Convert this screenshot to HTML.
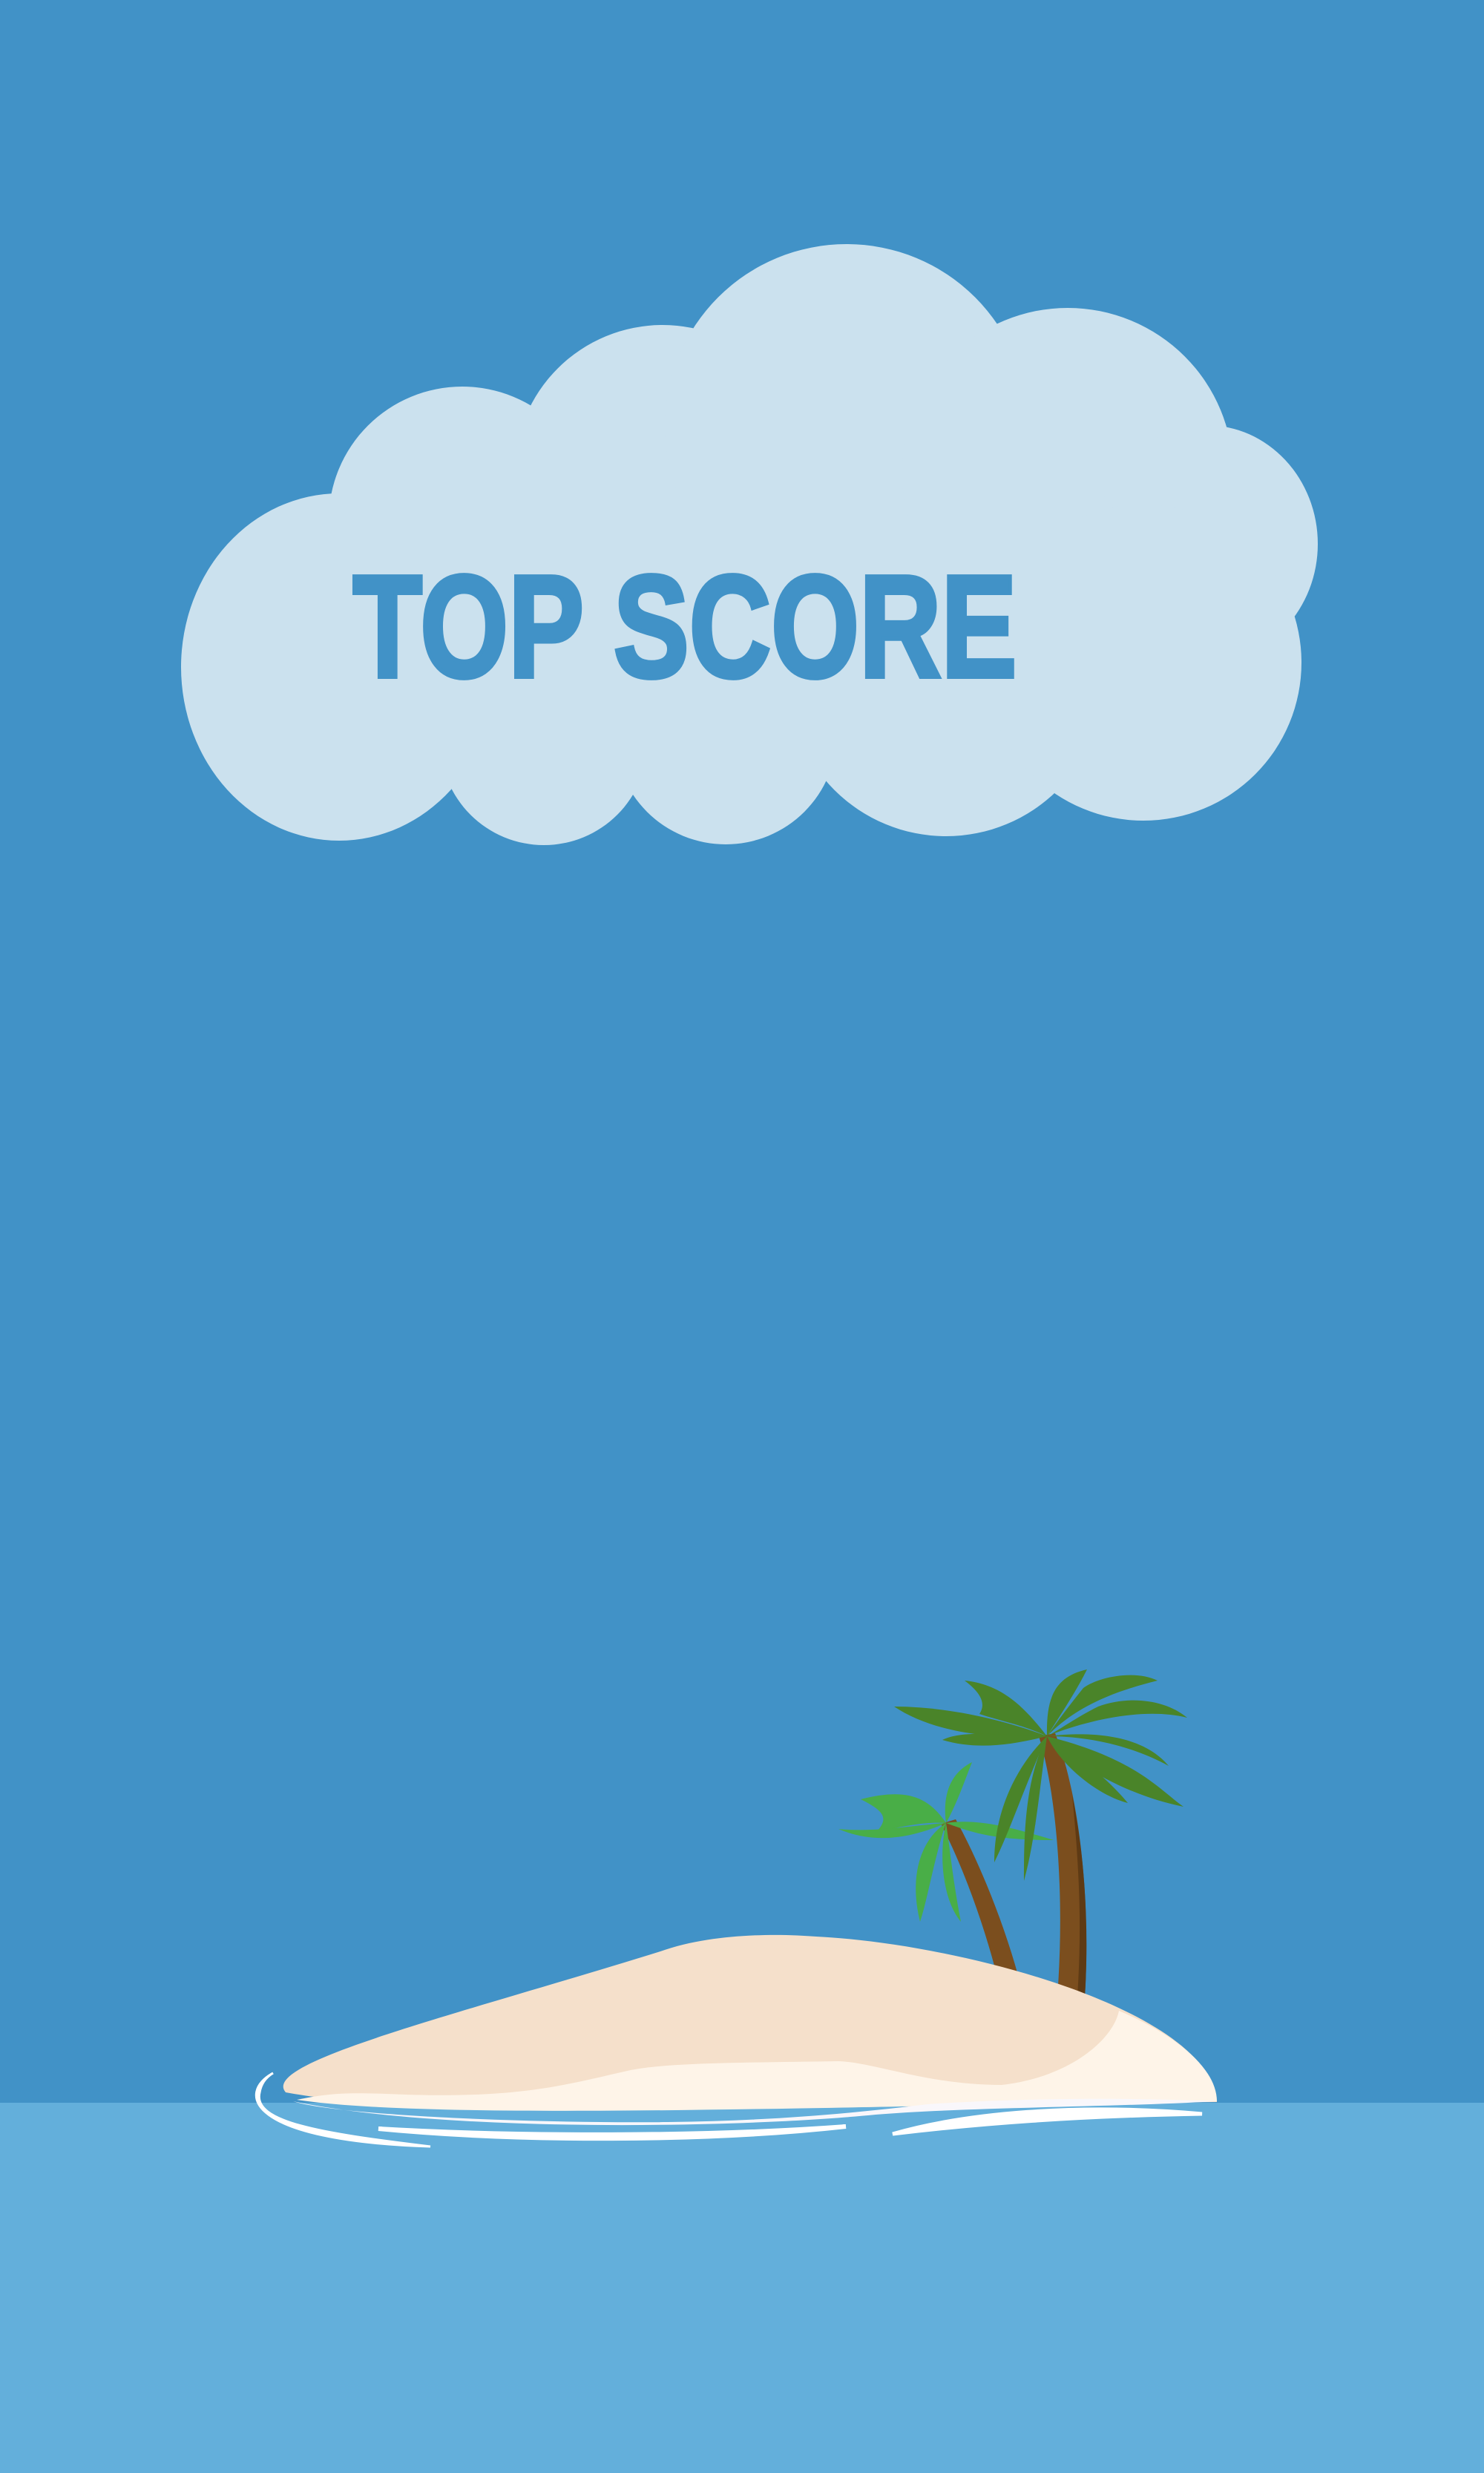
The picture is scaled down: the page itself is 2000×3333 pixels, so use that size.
<!DOCTYPE html>
<html><head><meta charset="utf-8"><style>
html,body{margin:0;padding:0;width:2000px;height:3333px;overflow:hidden;background:#4192c7}
svg{display:block}
</style></head><body>
<svg width="2000" height="3333" viewBox="0 0 2000 3333" xmlns="http://www.w3.org/2000/svg">
<rect width="2000" height="3333" fill="#4192c7"/>
<rect y="2834" width="2000" height="499" fill="#63afdb"/>
<g fill="#cbe1ee">
<ellipse cx="457" cy="899" rx="213" ry="234"/>
<circle cx="623" cy="701" r="180"/>
<circle cx="893" cy="638" r="200"/>
<circle cx="1141" cy="574" r="245"/>
<circle cx="1439" cy="638" r="223"/>
<ellipse cx="1626" cy="733" rx="150" ry="160"/>
<circle cx="733" cy="999" r="140"/>
<circle cx="978" cy="988" r="150"/>
<circle cx="1275" cy="914" r="213"/>
<circle cx="1541" cy="893" r="213"/>
<rect x="500" y="700" width="1200" height="280"/>
</g>
<text x="923" y="912" text-anchor="middle" font-family="Liberation Sans, sans-serif" font-weight="bold" font-size="196" fill="#4192c7" stroke="#4192c7" stroke-width="6" transform="translate(923 0) scale(0.78 1) translate(-923 0)">TOP SCORE</text>
<!-- palms -->
<g>
<path d="M1268,2458 C1300,2520 1328,2600 1345,2668 L1372,2662 C1352,2590 1320,2510 1288,2452 Z" fill="#7b4e1e"/>
<path d="M1400,2340 C1425,2420 1435,2560 1425,2690 L1462,2692 C1470,2560 1455,2420 1422,2336 Z" fill="#7b4e1e"/>
<path d="M1445,2420 C1455,2520 1458,2600 1452,2690 L1462,2692 C1468,2600 1462,2500 1445,2420Z" fill="#5e3a14"/>
<g fill="#49ae47">
<path d="M1275,2457 C1250,2420 1220,2410 1160,2425 C1190,2440 1200,2450 1180,2470 C1220,2460 1250,2455 1275,2457Z"/>
<path d="M1275,2457 C1230,2460 1180,2470 1130,2465 C1165,2480 1210,2485 1275,2457Z"/>
<path d="M1275,2457 C1270,2420 1280,2390 1310,2375 C1300,2400 1290,2430 1275,2457Z"/>
<path d="M1275,2457 C1240,2480 1225,2530 1240,2590 C1250,2560 1260,2500 1275,2457Z"/>
<path d="M1275,2457 C1265,2500 1270,2560 1295,2590 C1285,2540 1280,2490 1275,2457Z"/>
<path d="M1275,2457 C1310,2470 1340,2480 1420,2480 C1370,2465 1320,2450 1275,2457Z"/>
</g>
<g fill="#4a8429">
<path d="M1411,2340 C1380,2300 1350,2270 1300,2265 C1320,2280 1330,2295 1320,2310 C1350,2320 1380,2325 1411,2340Z"/>
<path d="M1411,2340 C1360,2320 1280,2300 1205,2300 C1250,2330 1320,2345 1411,2340Z"/>
<path d="M1411,2340 C1360,2340 1300,2330 1270,2345 C1320,2360 1370,2350 1411,2340Z"/>
<path d="M1411,2340 C1410,2290 1420,2260 1465,2250 C1450,2280 1430,2310 1411,2340Z"/>
<path d="M1411,2340 C1450,2300 1500,2280 1560,2265 C1530,2250 1480,2260 1460,2275 C1440,2300 1425,2320 1411,2340Z"/>
<path d="M1411,2340 C1460,2320 1540,2300 1600,2315 C1570,2290 1520,2285 1480,2300 C1450,2315 1430,2330 1411,2340Z"/>
<path d="M1411,2340 C1460,2340 1520,2350 1575,2380 C1550,2350 1500,2330 1411,2340Z"/>
<path d="M1411,2340 C1450,2380 1520,2420 1595,2435 C1560,2410 1530,2370 1411,2340Z"/>
<path d="M1411,2340 C1430,2380 1480,2420 1520,2430 C1495,2400 1460,2370 1411,2340Z"/>
<path d="M1411,2340 C1370,2380 1340,2440 1340,2510 C1360,2470 1380,2410 1411,2340Z"/>
<path d="M1411,2340 C1380,2400 1380,2480 1380,2535 C1395,2480 1400,2420 1411,2340Z"/>
<path d="M1411,2340 C1390,2380 1390,2420 1395,2460 C1400,2420 1405,2380 1411,2340Z"/>
</g>
</g>
<!-- island -->
<path d="M385,2820 C350,2780 600,2720 890,2630 C960,2605 1050,2606 1100,2610 C1300,2620 1630,2710 1640,2832 L1640,2833 C1200,2836 600,2860 385,2820Z" fill="#f5e0cb"/>
<path d="M400,2830 C440,2822 460,2820 520,2822 C700,2830 760,2810 850,2790 C900,2780 1000,2780 1130,2778 C1180,2780 1250,2810 1350,2810 C1440,2800 1500,2750 1508,2710 C1590,2745 1640,2790 1640,2832 C1200,2836 600,2860 400,2830Z" fill="#fef4e8"/>
<path d="M395,2832 C450,2850 700,2862 900,2860 C1050,2858 1150,2848 1250,2836 C1400,2826 1550,2828 1640,2832 C1500,2840 1300,2840 1180,2850 C1000,2868 600,2875 395,2832Z" fill="#f9f7fb"/>
<g fill="#ffffff">
<path d="M368,2794 C320,2820 330,2885 580,2893 C430,2875 340,2860 350,2820 C352,2808 358,2800 368,2794Z" stroke="#fff" stroke-width="3"/>
<path d="M510,2869 C700,2887 950,2887 1140,2866 C950,2880 700,2880 510,2869Z" stroke="#fff" stroke-width="6"/>
<path d="M1203,2876 C1300,2848 1450,2834 1620,2849 C1450,2852 1320,2862 1203,2876Z" stroke="#fff" stroke-width="5"/>
</g>
</svg>
</body></html>
